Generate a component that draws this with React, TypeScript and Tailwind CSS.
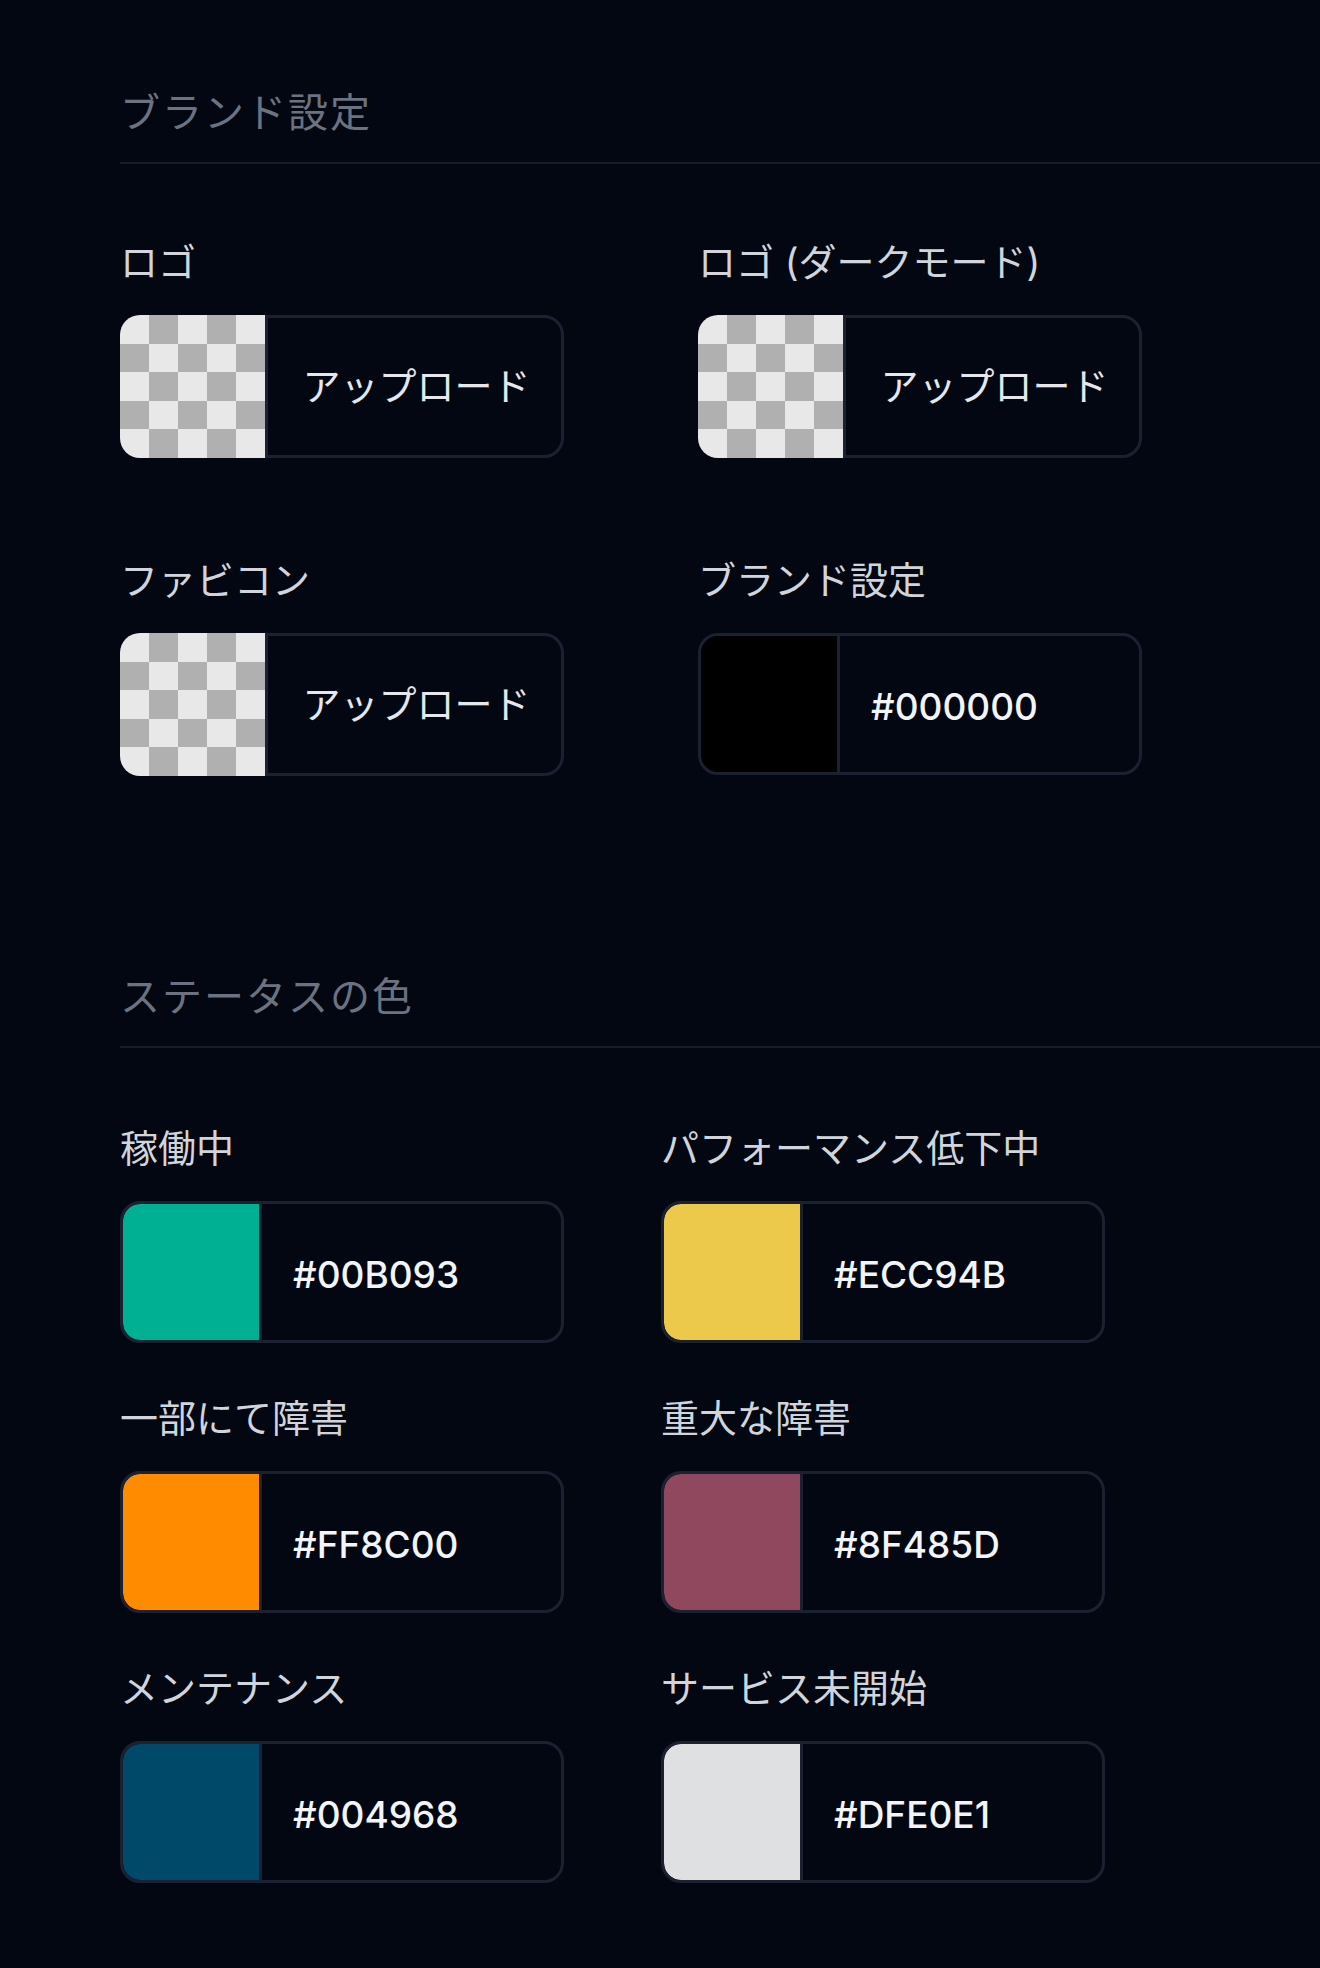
import React from 'react';

const fontStack = "font-['Inter','Noto_Sans_CJK_JP',sans-serif]";

const Checker: React.FC = () => {
  const cells = Array.from({ length: 25 }, (_, i) => {
    const row = Math.floor(i / 5);
    const col = i % 5;
    return (row + col) % 2 === 0;
  });
  return (
    <div className="grid h-full w-[145px] shrink-0 grid-cols-5 grid-rows-5 overflow-hidden rounded-l-[20px]">
      {cells.map((light, i) => (
        <div key={i} className={light ? 'bg-[#e8e8e8]' : 'bg-[#b0b0b0]'} />
      ))}
    </div>
  );
};

const UploadField: React.FC<{ label: string }> = ({ label }) => (
  <div>
    <p className="text-[38px] leading-[57px] text-[#d1d5db]">{label}</p>
    <div className="mt-[24px] flex h-[143px] w-[444px]">
      <Checker />
      <button className="flex flex-1 items-center justify-center rounded-r-[20px] border-[3px] border-[#1b2130] pl-[4px] text-[38px] text-[#e5e7eb]">
        アップロード
      </button>
    </div>
  </div>
);

const ColorField: React.FC<{ label: string; color: string; swatch: string }> = ({ label, color, swatch }) => (
  <div>
    <p className="text-[38px] leading-[57px] text-[#d1d5db]">{label}</p>
    <div className="mt-[24px] flex h-[142px] w-[444px] overflow-hidden rounded-[20px] border-[3px] border-[#1b2130]">
      <div className={`w-[139px] shrink-0 rounded-l-[17px] border-r-[3px] border-[#1b2130] ${swatch}`} />
      <div className="flex items-center pl-[31px] pt-[5px] text-[37px] font-medium text-[#f3f4f6]">{color}</div>
    </div>
  </div>
);

const SectionTitle: React.FC<{ title: string }> = ({ title }) => (
  <div className="border-b-2 border-[#161c29] pb-[19px] pt-[3px]">
    <h2 className="text-[40px] leading-[60px] tracking-[2px] text-[#6b7280]">{title}</h2>
  </div>
);

const statuses = [
  { label: '稼働中', color: '#00B093', swatch: 'bg-[#00b093]' },
  { label: 'パフォーマンス低下中', color: '#ECC94B', swatch: 'bg-[#ecc94b]' },
  { label: '一部にて障害', color: '#FF8C00', swatch: 'bg-[#ff8c00]' },
  { label: '重大な障害', color: '#8F485D', swatch: 'bg-[#8f485d]' },
  { label: 'メンテナンス', color: '#004968', swatch: 'bg-[#004968]' },
  { label: 'サービス未開始', color: '#DFE0E1', swatch: 'bg-[#dfe0e1]' },
];

export default function App() {
  return (
    <div className={`min-h-screen w-full bg-[#030712] pl-[120px] pt-[80px] ${fontStack}`}>
      <section>
        <SectionTitle title="ブランド設定" />
        <div className="mt-[70px] grid grid-cols-[444px_444px] gap-x-[134px] gap-y-[94px]">
          <UploadField label="ロゴ" />
          <UploadField label="ロゴ (ダークモード)" />
          <UploadField label="ファビコン" />
          <ColorField label="ブランド設定" color="#000000" swatch="bg-black" />
        </div>
      </section>

      <section className="mt-[188px]">
        <SectionTitle title="ステータスの色" />
        <div className="mt-[72px] grid grid-cols-[444px_444px] gap-x-[97px] gap-y-[47px]">
          {statuses.map(s => (
            <ColorField key={s.label} label={s.label} color={s.color} swatch={s.swatch} />
          ))}
        </div>
      </section>
    </div>
  );
}
